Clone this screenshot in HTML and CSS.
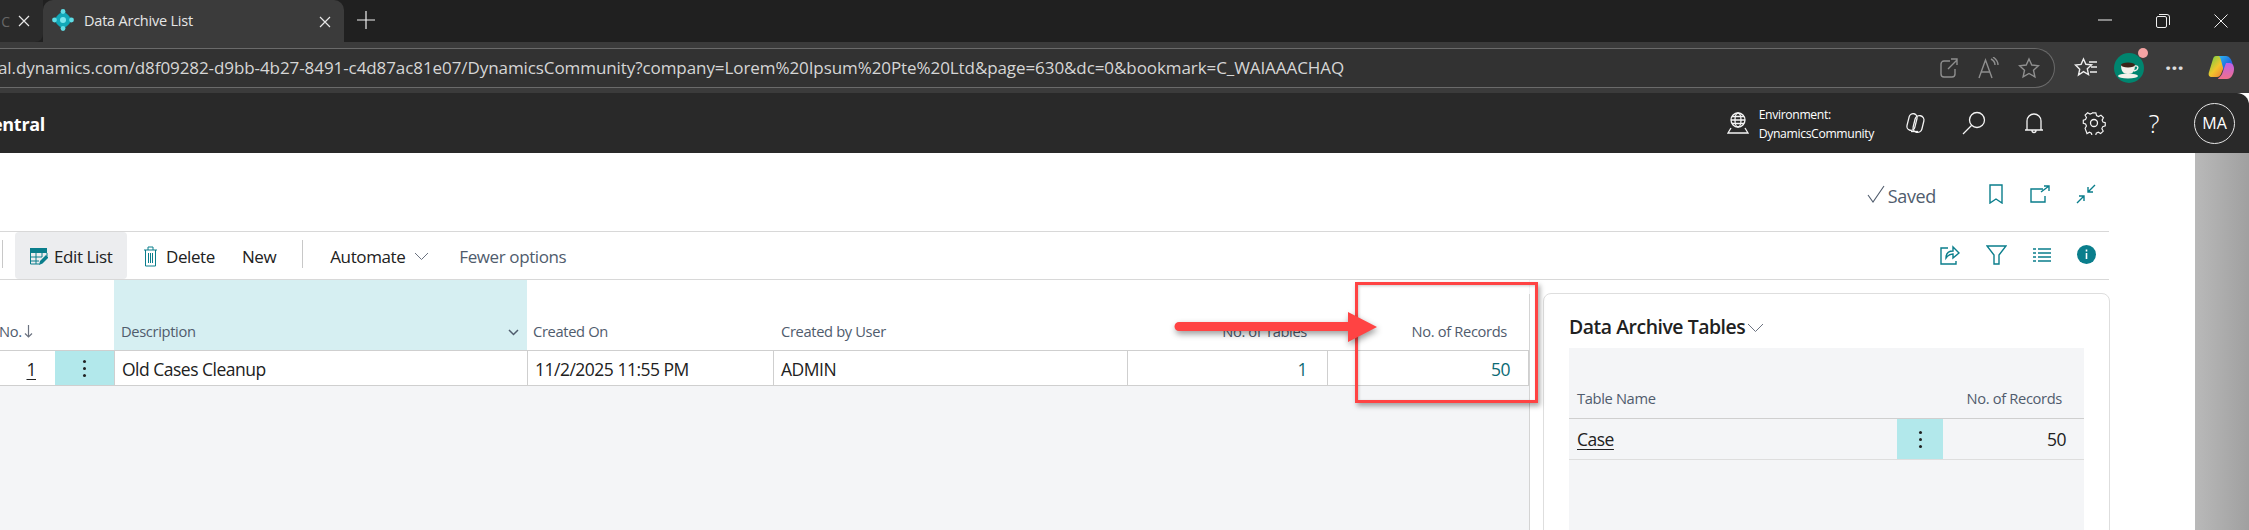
FILE: index.html
```html
<!DOCTYPE html>
<html lang="en">
<head>
<meta charset="utf-8">
<title>Data Archive List</title>
<link rel="stylesheet" href="styles.css">
</head>
<body>
<svg class="defs" width="0" height="0" aria-hidden="true">
  <defs>
    <linearGradient id="cpA" x1="0" y1="0" x2="1" y2="1"><stop offset="0" stop-color="#2fb8f0"/><stop offset="0.55" stop-color="#1f6fe0"/><stop offset="1" stop-color="#7a3fe0"/></linearGradient>
    <linearGradient id="cpB" x1="0" y1="0" x2="1" y2="1"><stop offset="0" stop-color="#5fd04a"/><stop offset="0.5" stop-color="#f2c52c"/><stop offset="1" stop-color="#f0653a"/></linearGradient>
    <linearGradient id="cpC" x1="0" y1="0" x2="0" y2="1"><stop offset="0" stop-color="#c060e8"/><stop offset="1" stop-color="#f0708a"/></linearGradient>
  </defs>
</svg>

<header class="tabstrip">
  <div class="tab-prev">
    <span class="tab-prev-text">C</span>
    <svg class="ic12" viewBox="0 0 12 12"><path d="M1 1l10 10M11 1L1 11"/></svg>
  </div>
  <div class="tab-active">
    <svg class="bc-logo" width="22" height="22" viewBox="0 0 22 22">
      <path d="M11 1l10 10-10 10L1 11z" fill="#0f8fa0"/>
      <circle cx="11" cy="11" r="7" fill="#12a8b8"/>
      <circle cx="11" cy="11" r="3" fill="#7be6ee"/>
      <circle cx="11" cy="2.5" r="2.4" fill="#5fdde6"/>
      <circle cx="11" cy="19.5" r="2.4" fill="#5fdde6"/>
      <circle cx="2.5" cy="11" r="2.4" fill="#5fdde6"/>
      <circle cx="19.5" cy="11" r="2.4" fill="#5fdde6"/>
    </svg>
    <span class="tab-title">Data Archive List</span>
    <svg class="ic12 tab-close" viewBox="0 0 12 12"><path d="M1 1l10 10M11 1L1 11"/></svg>
  </div>
  <svg class="tab-new" width="18" height="18" viewBox="0 0 18 18"><path d="M9 0v18M0 9h18"/></svg>
  <div class="win-controls">
    <svg width="14" height="14" viewBox="0 0 14 14"><path d="M0 6h14"/></svg>
    <svg width="14" height="14" viewBox="0 0 14 14"><rect x="0.5" y="2.5" width="10" height="11" rx="1.5"/><path d="M3 .5h8a2.5 2.5 0 0 1 2.5 2.5v8"/></svg>
    <svg width="14" height="14" viewBox="0 0 14 14"><path d="M.5.5l13 13M13.5.5l-13 13"/></svg>
  </div>
</header>

<div class="browserbar">
  <div class="addressbar">
    <span class="url">al.dynamics.com/d8f09282-d9bb-4b27-8491-c4d87ac81e07/DynamicsCommunity?company=Lorem%20Ipsum%20Pte%20Ltd&amp;page=630&amp;dc=0&amp;bookmark=C_WAIAAACHAQ</span>
    <div class="addr-icons">
      <svg width="18" height="20" viewBox="0 0 18 20"><path d="M10 3H4a3 3 0 0 0-3 3v10a3 3 0 0 0 3 3h8a3 3 0 0 0 3-3v-5M8 11L17 2M11 1h6v6"/></svg>
      <svg width="22" height="22" viewBox="0 0 22 22"><path d="M2 21L8.500 3l6.500 18M4.500 15h8M14 2c2 1 4 3 4 6M16 0c3 2 5 4 5 8"/></svg>
      <svg width="22" height="22" viewBox="0 0 22 22"><path d="M11 2l2.800 6 6.700.7-5 4.500 1.400 6.600L11 16.500l-5.900 3.300 1.400-6.600-5-4.500 6.700-.7z"/></svg>
    </div>
  </div>
  <div class="browser-tools">
    <svg class="fav" width="24" height="22" viewBox="0 0 24 22"><path d="M9.500 2l2.400 5.300 5.600.6-4.200 3.900 1.200 5.700-5-2.900L4.500 18l1.200-5.700L1.500 8l5.600-.6z"/><path d="M15 5h8M17 10h6M16 15h7"/></svg>
    <div class="avatar">
      <svg width="30" height="30" viewBox="0 0 30 30">
        <circle cx="15" cy="15" r="15" fill="#00856f"/>
        <path d="M7 12h14c0 6-2 9-7 9s-7-3-7-9z" fill="#f4f1ea"/>
        <ellipse cx="14" cy="12" rx="7" ry="2.600" fill="#3b2418"/>
        <path d="M21 13c4-1 4 4-1 5" fill="none" stroke="#f4f1ea" stroke-width="1.300"/>
        <ellipse cx="14" cy="23" rx="10" ry="2.400" fill="#f4f1ea"/>
      </svg>
      <span class="avatar-dot"></span>
    </div>
    <span class="more">···</span>
    <svg class="copilot" width="28" height="28" viewBox="0 0 28 28">
      <path d="M9 2h8c2 0 3 1 3 3l-6 15c-1 2-2 3-4 3H5c-3 0-4-2-3-5L6 5c.5-2 1.500-3 3-3z" fill="url(#cpB)"/>
      <path d="M12 2h7c3 0 5 3 6 6l1 4c1 3 0 5-3 5h-6l-2-7c-1-3-1-6-3-8z" fill="url(#cpA)"/>
      <path d="M19 9h3c3 0 5 2 5 6 0 5-3 10-7 10h-8c-3 0 2-2 3-5z" fill="url(#cpC)"/>
    </svg>
  </div>
</div>

<div class="appbar">
  <span class="brand">entral</span>
  <div class="env">
    <svg class="line-w" width="22" height="22" viewBox="0 0 22 22"><circle cx="11" cy="8" r="7"/><ellipse cx="11" cy="8" rx="3" ry="7"/><path d="M4 8h14M5 4.500h12M5 11.500h12M4 16l-3 5h20l-3-5"/></svg>
    <div class="env-text"><span>Environment:</span><span>DynamicsCommunity</span></div>
  </div>
  <div class="app-icons">
    <svg class="line-w" width="22" height="22" viewBox="0 0 22 22"><rect x="4" y="1.500" width="8" height="17" rx="4" transform="rotate(14 8 10)"/><rect x="10" y="3.500" width="9" height="17" rx="4.500" transform="rotate(14 14.500 12)"/><path d="M7 19.500h7"/></svg>
    <svg class="line-w" width="24" height="24" viewBox="0 0 24 24"><circle cx="15" cy="9" r="7.500"/><path d="M9.500 14.500L1 23"/></svg>
    <svg class="line-w" width="24" height="24" viewBox="0 0 24 24"><path d="M5 19V10a7 7 0 0 1 14 0v9zM3 19h18M10 19.500a2 2 0 0 0 4 0"/></svg>
    <svg class="line-w" width="24" height="24" viewBox="0 0 24 24"><circle cx="12" cy="12" r="3.500"/><path d="M10 1.500h4l.7 3 2.200 1 2.700-1.500 2.800 2.800-1.500 2.700 1 2.200 2.500.7v3.500l-2.800.8-1 2.200 1.500 2.700-2.800 2.800-2.700-1.500-2.200 1-.7 2.800h-4l-.7-2.800-2.200-1-2.700 1.500L2 18.600l1.500-2.700-1-2.200L0 13v-3.500l2.500-.7 1-2.200L2 4 4.800 1.300l2.700 1.500 2.200-1z" transform="translate(1.300 .6) scale(.9)"/></svg>
    <span class="help">?</span>
    <span class="initials">MA</span>
  </div>
</div>

<main class="page">
  <div class="content">
    <div class="titlebar">
      <span class="saved"><svg class="line-g" width="18" height="18" viewBox="0 0 18 18"><path d="M1 10l5 7L17 1"/></svg>Saved</span>
      <div class="title-icons">
        <svg class="line-t" width="14" height="20" viewBox="0 0 14 20"><path d="M1 1h12v18l-6-4-6 4z"/></svg>
        <svg class="line-t" width="20" height="18" viewBox="0 0 20 18"><path d="M13 4H1v13h14v-6M11 7l8-6M14 1h5v5"/></svg>
        <svg class="line-t" width="20" height="20" viewBox="0 0 20 20"><path d="M19 1l-7 7M12 3v5h5M1 19l7-7M3 12h5v5"/></svg>
      </div>
    </div>
    <nav class="actions">
      <span class="act-rule"></span>
      <button class="act act-hover">
        <svg width="18" height="18" viewBox="0 0 18 18"><path d="M0 0h17v5H0z" fill="#0a7e8c"/><path d="M.5 5v11h9M17 5v3M6 5v11M12 5v4M.5 9H12M.5 13H9" fill="none" stroke="#0a7e8c"/><path d="M9 17l1-4 6-6 2.500 2.500-6 6z" fill="#0a7e8c"/></svg>
        <span>Edit List</span>
      </button>
      <button class="act">
        <svg width="15" height="21" viewBox="0 0 15 21" fill="none" stroke="#0a7e8c"><path d="M1 4h13M5 4V1h5v3M2.500 4v16h10V4M5.500 7v10M7.500 7v10M9.500 7v10"/></svg>
        <span>Delete</span>
      </button>
      <button class="act act-new"><span>New</span></button>
      <span class="act-rule act-rule-2"></span>
      <button class="act act-auto">
        <span>Automate</span>
        <svg class="chev" width="15" height="9" viewBox="0 0 15 9"><path d="M1 1l6.500 6.500L14 1"/></svg>
      </button>
      <button class="act act-fewer"><span>Fewer options</span></button>
      <div class="act-icons">
        <svg class="line-t" width="20" height="20" viewBox="0 0 20 20"><path d="M8 3H1v16h15v-3M6 13c0-5 3-7 7-7V2l6 6-6 5V9c-3 0-5 1-7 4z"/></svg>
        <svg class="line-t" width="21" height="20" viewBox="0 0 21 20"><path d="M1 1h19l-7 9v9H8v-9z"/></svg>
        <svg class="line-t" width="18" height="14" viewBox="0 0 18 14"><path d="M0 1h3M5 1h13M0 5h3M5 5h13M0 9h3M5 9h13M0 13h3M5 13h13"/></svg>
        <svg width="19" height="19" viewBox="0 0 19 19"><circle cx="9.500" cy="9.500" r="9.500" fill="#0a7e8c"/><path d="M9.500 8v6M9.500 4.500v2" stroke="#fff" stroke-width="1.600"/></svg>
      </div>
    </nav>
    <div class="split">
      <section class="list">
        <div class="grid">
          <div class="th th-no"><span>No.</span><svg width="9" height="13" viewBox="0 0 9 13"><path d="M4.500 0v12M1 8.500l3.500 3.500L8 8.500"/></svg></div>
          <div class="th"></div>
          <div class="th th-sel"><span>Description</span><svg width="11" height="7" viewBox="0 0 11 7"><path d="M1 1l4.500 4.500L10 1"/></svg></div>
          <div class="th th-l"><span>Created On</span></div>
          <div class="th th-l"><span>Created by User</span></div>
          <div class="th th-r"><span>No. of Tables</span></div>
          <div class="th th-r th-last"><span>No. of Records</span></div>

          <div class="td td-no"><span class="u">1</span></div>
          <div class="td td-menu"><span class="kebab"></span></div>
          <div class="td td-l sep"><span>Old Cases Cleanup</span></div>
          <div class="td td-l sep"><span>11/2/2025 11:55 PM</span></div>
          <div class="td td-l sep"><span>ADMIN</span></div>
          <div class="td td-r sep link"><span>1</span></div>
          <div class="td td-r sep link td-last"><span>50</span></div>
        </div>
      </section>
      <aside class="card">
        <h2 class="card-title">Data Archive Tables<svg class="chev" width="17" height="10" viewBox="0 0 17 10"><path d="M1 1l7.500 7.500L16 1"/></svg></h2>
        <div class="sub">
          <div class="sub-head"><span>Table Name</span><span>No. of Records</span></div>
          <div class="sub-row">
            <span class="sub-name u">Case</span>
            <span class="sub-menu"><span class="kebab"></span></span>
            <span class="sub-num">50</span>
          </div>
        </div>
      </aside>
    </div>
  </div>
  <div class="side-shade"></div>
</main>

<div class="callout-box"></div>
<svg class="callout-arrow" width="205" height="36" viewBox="0 0 205 36">
  <path d="M5 12h169V2l29 15-29 15V21H5a4.500 4.500 0 0 1 0-9z" fill="#ff4343"/>
</svg>
</body>
</html>
```
FILE: styles.css
```css
* { box-sizing: border-box; }
html, body { margin: 0; padding: 0; }
body {
  width: 2249px;
  height: 530px;
  overflow: hidden;
  position: relative;
  background: #fff;
  font-family: "Open Sans", "Noto Sans", sans-serif;
  color: #212121;
}
.defs { position: absolute; }
svg { display: block; flex: none; }

/* browser tab strip */
.tabstrip {
  height: 42px;
  background: #202020;
  display: flex;
  align-items: flex-start;
}
.tab-prev {
  width: 43px;
  height: 42px;
  background: #2a2a2a;
  border-bottom-right-radius: 8px;
  display: flex;
  align-items: center;
  justify-content: flex-end;
  gap: 8px;
  padding-right: 13px;
  overflow: hidden;
}
.tab-prev-text { color: #666; font-size: 14px; margin-left: -4px; }
.ic12 { width: 12px; height: 12px; fill: none; stroke: #e8e8e8; stroke-width: 1.2; }
.tab-active {
  width: 301px;
  height: 42px;
  background: #3b3b3b;
  border-radius: 10px 10px 0 0;
  display: flex;
  align-items: center;
  padding: 0 13px 0 9px;
}
.bc-logo { margin-right: 10px; margin-top: -2px; }
.tab-title { color: #e6e6e6; font-size: 14.5px; letter-spacing: -0.22px; margin-top: -2px; flex: 1; }
.tab-close { margin-top: 2px; }
.tab-new { margin: 11px 0 0 13px; fill: none; stroke: #eee; stroke-width: 1.2; }
.win-controls {
  margin-left: auto;
  padding: 14px 21px 0 0;
  display: flex;
  justify-content: flex-end;
  gap: 44px;
}
.win-controls svg { fill: none; stroke: #eee; stroke-width: 1; }

/* browser toolbar */
.browserbar {
  height: 51px;
  background: #3b3b3b;
  display: flex;
  padding-top: 6px;
  align-items: flex-start;
}
.addressbar {
  width: 2055px;
  height: 40px;
  background: #323232;
  border: 1px solid #6a6a6a;
  border-left: 0;
  border-radius: 0 20px 20px 0;
  display: flex;
  align-items: center;
  padding-right: 14px;
  overflow: hidden;
}
.url { color: #d6d6d6; font-size: 17px; white-space: nowrap; letter-spacing: -0.08px; margin-left: -2px; margin-top: -1px; }
.addr-icons { margin-left: auto; display: flex; align-items: center; gap: 19px; }
.addr-icons svg { fill: none; stroke: #8f8f8f; stroke-width: 1.4; }
.browser-tools {
  flex: 1;
  height: 40px;
  display: flex;
  align-items: center;
  padding-left: 19px;
}
.fav { fill: none; stroke: #eee; stroke-width: 1.4; }
.avatar { position: relative; margin-left: 16px; }
.avatar-dot {
  position: absolute;
  top: -5px;
  right: -4px;
  width: 10px;
  height: 10px;
  border-radius: 50%;
  background: #f4a3a3;
}
.more { color: #ddd; font-size: 22px; font-weight: 700; line-height: 1; margin-left: 21px; width: 30px; margin-top: -3px; }
.copilot { margin-left: 12px; }

/* app header */
.appbar {
  height: 60px;
  background: #292929;
  border-radius: 0 12px 0 0;
  display: flex;
  align-items: center;
  color: #fff;
}
.brand { font-size: 18px; font-weight: 700; letter-spacing: -0.3px; margin-left: -8px; margin-top: 2px; }
.env { margin-left: auto; display: flex; align-items: center; gap: 10px; }
.env-text { display: flex; flex-direction: column; font-size: 12.2px; line-height: 19px; letter-spacing: -0.35px; margin-top: 1px; }
.line-w { fill: none; stroke: #f4f4f4; stroke-width: 1.3; }
.app-icons { display: flex; align-items: center; margin-left: 30px; gap: 36px; margin-right: 14px; }
.help { width: 24px; text-align: center; font-size: 26px; font-weight: 300; line-height: 24px; }
.initials {
  width: 41px;
  height: 41px;
  margin-left: -8px;
  border: 1px solid #e6e6e6;
  border-radius: 50%;
  font-size: 16px;
  display: flex;
  align-items: center;
  justify-content: center;
}

/* page */
.page { display: flex; height: 377px; }
.content { width: 2195px; height: 377px; overflow: hidden; }
.side-shade { flex: 1; background: linear-gradient(90deg, #b9b9b9 0%, #a0a0a0 100%); }
.titlebar {
  width: 2109px;
  height: 79px;
  border-bottom: 1px solid #d8d8d8;
  display: flex;
  align-items: center;
  justify-content: flex-end;
  padding: 0 13px 0 0;
}
.saved { display: flex; align-items: center; gap: 3px; color: #505c6d; font-size: 18px; letter-spacing: -0.35px; margin-top: 8px; }
.line-g { fill: none; stroke: #505c6d; stroke-width: 1.1; margin-top: -4px; }
.title-icons { display: flex; align-items: center; gap: 26.5px; margin-left: 53px; margin-top: 4px; }
.line-t { fill: none; stroke: #0a7e8c; stroke-width: 1.4; }

/* action bar */
.actions {
  width: 2109px;
  height: 48px;
  border-bottom: 1px solid #d8d8d8;
  display: flex;
  align-items: center;
  position: relative;
}
.act-rule { width: 1px; height: 28px; background: #c8c8c8; margin-left: 2px; margin-bottom: 4px; }
.act {
  height: 47px;
  border: 0;
  background: none;
  padding: 2px 0 0;
  font: inherit;
  font-size: 17px;
  letter-spacing: -0.4px;
  color: #212121;
  display: flex;
  align-items: center;
  gap: 6px;
}
.act-hover { width: 112px; margin-left: 12px; background: #ecedef; border-radius: 4px; padding-left: 15px; }
.act-hover + .act { margin-left: 16px; gap: 8px; }
.act-new { margin-left: 27px; }
.act-rule-2 { margin-left: 26px; }
.act-auto { margin-left: 27px; gap: 9px; }
.chev { fill: none; stroke: #6b7280; stroke-width: 1; }
.act-fewer { margin-left: 30px; color: #505c6d; }
.act-icons { margin-left: auto; margin-right: 13px; display: flex; align-items: center; gap: 26px; margin-top: -2px; }

/* split */
.split { display: flex; height: 250px; align-items: stretch; }
.list { width: 1530px; background: #f4f5f7; position: relative; }
.list::after {
  content: "";
  position: absolute;
  top: 14px;
  right: 0;
  bottom: 0;
  width: 1px;
  background: #d4d4d4;
}
.grid {
  display: grid;
  grid-template-columns: 55px 59px 413px 246px 354px 200px 202px;
  grid-template-rows: 71px 35px;
  width: 1529px;
}
.th {
  background: #fff;
  color: #505c6d;
  font-size: 14.7px;
  letter-spacing: -0.35px;
  display: flex;
  align-items: flex-end;
  padding-bottom: 9px;
  border-bottom: 1px solid #cfcfcf;
}
.th svg { fill: none; stroke: #6b7280; stroke-width: 1.200; }
.th-no { gap: 2px; overflow: hidden; }
.th-no span { margin-left: -1px; }
.th-no svg { margin-bottom: 3px; }
.th-sel { background: #d6eff2; padding: 0 8px 9px 7px; justify-content: space-between; }
.th-sel svg { margin-bottom: 5px; stroke: #505c6d; stroke-width: 1.500; }
.th-l { padding-left: 6px; }
.th-l + .th-l { padding-left: 8px; }
.th-r { justify-content: flex-end; padding-right: 20px; }
.th-last { padding-right: 22px; }
.td {
  background: #fff;
  font-size: 17.5px;
  letter-spacing: -0.5px;
  display: flex;
  align-items: center;
  border-bottom: 1px solid #cfcfcf;
  height: 35px;
  padding-top: 1px;
}
.sep { border-left: 1px solid #cfcfcf; }
.td-no { justify-content: flex-end; padding-right: 19px; }
.u { text-decoration: underline; text-underline-offset: 3px; }
.td-menu { background: #b2e8eb; justify-content: center; }
.kebab {
  width: 3px;
  height: 3px;
  border-radius: 50%;
  background: #222;
  box-shadow: 0 -7px 0 #222, 0 7px 0 #222;
}
.td-l { padding-left: 7px; }
.td-r { justify-content: flex-end; padding-right: 20px; }
.td-last { border-right: 1px solid #cfcfcf; padding-right: 18px; }
.link { color: #0b6a75; }

/* right card */
.card {
  width: 567px;
  margin: 13px 0 0 13px;
  height: 260px;
  background: #fff;
  border: 1px solid #dedede;
  border-radius: 8px;
  padding: 20px 25px 0 25px;
}
.card-title {
  margin: 0;
  height: 34px;
  padding-bottom: 10px;
  font-size: 19.4px;
  font-weight: 600;
  letter-spacing: -0.45px;
  display: flex;
  align-items: center;
  gap: 2px;
  color: #212121;
}
.card-title .chev { margin-top: 3px; }
.sub { background: #f4f5f7; height: 200px; width: 515px; }
.sub-head {
  height: 71px;
  border-bottom: 1px solid #cfcfcf;
  display: flex;
  align-items: flex-end;
  justify-content: space-between;
  padding: 0 22px 10px 8px;
  color: #505c6d;
  font-size: 14.7px;
  letter-spacing: -0.35px;
}
.sub-row {
  height: 41px;
  border-bottom: 1px solid #dedede;
  display: flex;
  align-items: center;
  font-size: 17.5px;
  letter-spacing: -0.5px;
}
.sub-name { width: 328px; padding-left: 8px; }
.sub-menu { width: 46px; height: 40px; background: #b2e8eb; display: flex; align-items: center; justify-content: center; }
.sub-num { flex: 1; text-align: right; padding-right: 18px; }

/* annotation overlay */
.callout-box {
  position: absolute;
  left: 1355px;
  top: 282px;
  width: 183px;
  height: 121px;
  border: 3px solid #ff4343;
  box-shadow: 2px 3px 5px rgba(0,0,0,.35), inset 1px 1px 3px rgba(0,0,0,.2);
}
.callout-arrow {
  position: absolute;
  left: 1174px;
  top: 310px;
  filter: drop-shadow(1px 3px 3px rgba(0,0,0,.4));
}
```
